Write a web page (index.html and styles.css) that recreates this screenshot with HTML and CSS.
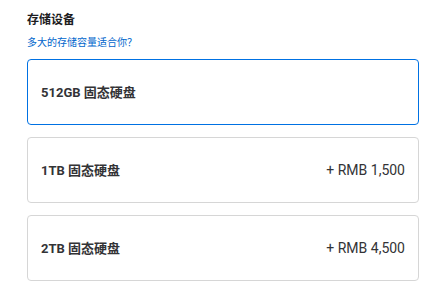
FILE: index.html
```html
<!DOCTYPE html>
<html lang="zh-CN">
<head>
<meta charset="utf-8">
<link rel="stylesheet" href="styles.css">
</head>
<body>
<div class="page">
  <h2 class="title">存储设备</h2>
  <a class="help" href="#">多大的存储容量适合你？</a>
  <div class="options">
    <div class="option selected"><span class="name">512GB 固态硬盘</span></div>
    <div class="option"><span class="name">1TB 固态硬盘</span><span class="price">+ RMB 1,500</span></div>
    <div class="option"><span class="name">2TB 固态硬盘</span><span class="price">+ RMB 4,500</span></div>
  </div>
</div>
</body>
</html>
```

FILE: styles.css
```css
html, body {
  margin: 0;
  padding: 0;
  background: #ffffff;
}
body {
  font-family: Roboto, "Noto Sans CJK SC", sans-serif;
  color: #1d1d1f;
}
.page {
  padding: 12px 19px 0 27px;
  width: 392px;
}
.title {
  margin: 0;
  font-size: 12px;
  line-height: 16px;
  font-weight: 700;
  color: #1d1d1f;
}
.help {
  display: block;
  margin-top: 8px;
  font-size: 10px;
  line-height: 13px;
  color: #0066cc;
  text-decoration: none;
}
.options {
  margin-top: 10px;
  display: flex;
  flex-direction: column;
  gap: 12px;
}
.option {
  box-sizing: border-box;
  height: 66px;
  border: 1px solid #d6d6d6;
  border-radius: 4px;
  display: flex;
  align-items: center;
  justify-content: space-between;
  padding: 0 13px 0 13px;
}
.option.selected {
  border-color: #0071e3;
}
.name {
  font-size: 13px;
  font-weight: 700;
  color: #333336;
  margin-top: -1px;
}
.price {
  font-size: 14px;
  color: #333336;
}
```
